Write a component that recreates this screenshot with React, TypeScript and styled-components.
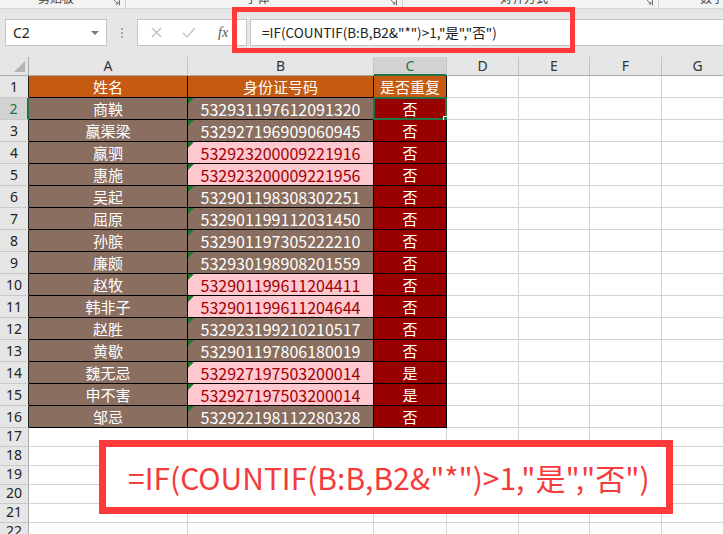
import React from 'react';
import styled, { createGlobalStyle, css } from 'styled-components';

const Global = createGlobalStyle`
  html, body { margin: 0; padding: 0; background: #fff; }
  body { font-family: "Noto Sans", "Noto Sans CJK SC", sans-serif; }
`;

const FORMULA = '=IF(COUNTIF(B:B,B2&"*")>1,"是","否")';

type Kind = 'head' | 'name' | 'id' | 'dup' | 'flag' | 'empty';

const rows: [string, string, boolean, string][] = [
  ['商鞅', '532931197612091320', false, '否'],
  ['嬴渠梁', '532927196909060945', false, '否'],
  ['嬴驷', '532923200009221916', true, '否'],
  ['惠施', '532923200009221956', true, '否'],
  ['吴起', '532901198308302251', false, '否'],
  ['屈原', '532901199112031450', false, '否'],
  ['孙膑', '532901197305222210', false, '否'],
  ['廉颇', '532930198908201559', false, '否'],
  ['赵牧', '532901199611204411', true, '否'],
  ['韩非子', '532901199611204644', true, '否'],
  ['赵胜', '532923199210210517', false, '否'],
  ['黄歇', '532901197806180019', false, '否'],
  ['魏无忌', '532927197503200014', true, '是'],
  ['申不害', '532927197503200014', true, '是'],
  ['邹忌', '532922198112280328', false, '否'],
];

const Page = styled.div`
  position: relative;
  width: 723px;
  height: 534px;
  overflow: hidden;
  background: #fff;
  display: flex;
  flex-direction: column;
`;

const RibbonStrip = styled.div`
  flex: none;
  height: 8px;
  background: #f3f3f3;
  border-bottom: 1px solid #d6d6d6;
  display: flex;
  overflow: hidden;
`;

const RibbonGroup = styled.div<{ $w: number }>`
  flex: none;
  width: ${p => p.$w}px;
  display: grid;
  grid-template-columns: 1fr auto;
  align-items: start;
  border-right: 1px solid #cfcfcf;
  box-sizing: border-box;
`;

const RibbonLabel = styled.span`
  justify-self: center;
  margin-top: -9px;
  font-family: "Noto Sans CJK SC", sans-serif;
  font-size: 12px;
  line-height: 14px;
  color: #444;
  white-space: nowrap;
`;

const Launcher = styled.svg`
  width: 8px;
  height: 8px;
  margin: -2px 5px 0 0;
`;

const FormulaBar = styled.div`
  flex: none;
  height: 48px;
  box-sizing: border-box;
  background: #e6e6e6;
  display: flex;
  align-items: flex-start;
  padding: 10px 0 0 5px;
`;

const NameBox = styled.div`
  flex: none;
  width: 102px;
  height: 27px;
  box-sizing: border-box;
  background: #fff;
  border: 1px solid #c6c6c6;
  display: flex;
  align-items: center;
  justify-content: space-between;
  padding: 0 7px 0 7px;
  font-size: 14px;
  color: #222;
`;

const Caret = styled.span`
  width: 0;
  height: 0;
  border-left: 4px solid transparent;
  border-right: 4px solid transparent;
  border-top: 4px solid #777;
`;

const Grip = styled.div`
  flex: none;
  width: 30px;
  height: 27px;
  display: flex;
  flex-direction: column;
  align-items: center;
  justify-content: center;
  gap: 2px;
`;

const GripDot = styled.span`
  width: 2px;
  height: 2px;
  background: #a8a8a8;
`;

const FxBox = styled.div`
  flex: none;
  width: 110px;
  height: 27px;
  box-sizing: border-box;
  background: #fff;
  border: 1px solid #c6c6c6;
  display: flex;
  align-items: center;
  padding-left: 13px;
  gap: 20px;
`;

const FxLabel = styled.span`
  font-family: "Liberation Serif", serif;
  font-style: italic;
  font-size: 14px;
  color: #555;
  margin-left: 2px;
`;

const FormulaInput = styled.div`
  flex: 1;
  margin-left: 3px;
  height: 27px;
  box-sizing: border-box;
  background: #fff;
  border: 1px solid #c6c6c6;
  border-right: none;
  padding-left: 11px;
  font-family: "Noto Sans CJK SC", sans-serif;
  font-size: 13.5px;
  line-height: 25px;
  color: #222;
  white-space: nowrap;
`;

const Sheet = styled.div`
  flex: none;
  display: grid;
  grid-template-columns: 29px 159px 186px 73px 72px 71px 72px 72px;
  grid-template-rows: 19px repeat(16, 22px) repeat(6, 19px);
`;

const Corner = styled.div`
  position: relative;
  box-sizing: border-box;
  background: #e6e6e6;
  border-right: 1px solid #ababab;
  border-bottom: 1px solid #ababab;
  &::after {
    content: '';
    position: absolute;
    right: 3px;
    bottom: 3px;
    width: 0;
    height: 0;
    border-left: 11px solid transparent;
    border-bottom: 11px solid #b4b4b4;
  }
`;

const ColHead = styled.div<{ $sel?: boolean }>`
  box-sizing: border-box;
  background: ${p => (p.$sel ? '#d2d2d2' : '#e6e6e6')};
  color: ${p => (p.$sel ? '#217346' : '#333')};
  border-right: 1px solid #c3c3c3;
  border-bottom: ${p => (p.$sel ? '2px solid #217346' : '1px solid #ababab')};
  display: flex;
  align-items: center;
  justify-content: center;
  font-size: 14px;
  line-height: 1;
`;

const RowHead = styled.div<{ $sel?: boolean; $table?: boolean }>`
  box-sizing: border-box;
  background: ${p => (p.$sel ? '#d2d2d2' : '#e6e6e6')};
  color: ${p => (p.$sel ? '#217346' : '#222')};
  border-bottom: 1px solid #c8c8c8;
  border-right: ${p =>
    p.$sel ? '2px solid #217346' : p.$table ? '1px solid #222' : '1px solid #ababab'};
  display: flex;
  align-items: flex-end;
  justify-content: center;
  padding-bottom: 1px;
  font-size: 14px;
  line-height: 18px;
`;

const palette: Record<Kind, { bg: string; fg: string; size: number }> = {
  head: { bg: '#c55a11', fg: '#fff', size: 15 },
  name: { bg: '#8a6e5f', fg: '#fff', size: 15 },
  id: { bg: '#8a6e5f', fg: '#fff', size: 16 },
  dup: { bg: '#ffc7ce', fg: '#9c0006', size: 16 },
  flag: { bg: '#990000', fg: '#fff', size: 15 },
  empty: { bg: '#fff', fg: '#000', size: 15 },
};

const Cell = styled.div<{ $kind: Kind }>`
  position: relative;
  box-sizing: border-box;
  background: ${p => palette[p.$kind].bg};
  color: ${p => palette[p.$kind].fg};
  font-size: ${p => palette[p.$kind].size}px;
  font-family: "Noto Sans CJK SC", sans-serif;
  border-right: 1px solid ${p => (p.$kind === 'empty' ? '#d4d4d4' : '#000')};
  border-bottom: 1px solid ${p => (p.$kind === 'empty' ? '#d4d4d4' : '#000')};
  display: flex;
  align-items: center;
  justify-content: center;
  line-height: 1;
  white-space: nowrap;
  ${p =>
    (p.$kind === 'id' || p.$kind === 'dup') &&
    css`
      &::before {
        content: '';
        position: absolute;
        left: 0;
        top: 0;
        width: 0;
        height: 0;
        border-top: 6px solid #1c7a2c;
        border-right: 6px solid transparent;
      }
    `}
`;

const Selection = styled.span`
  position: absolute;
  left: -1px;
  top: -1px;
  right: -1px;
  bottom: -1px;
  border: 2px solid #217346;
  pointer-events: none;
  &::after {
    content: '';
    position: absolute;
    right: -5px;
    bottom: -5px;
    width: 5px;
    height: 5px;
    background: #217346;
    border: 1px solid #fff;
  }
`;

const RedFrame = styled.div<{ $x: number; $y: number; $w: number; $h: number; $b: number; $fill?: boolean }>`
  position: absolute;
  left: ${p => p.$x}px;
  top: ${p => p.$y}px;
  width: ${p => p.$w}px;
  height: ${p => p.$h}px;
  box-sizing: border-box;
  border: ${p => p.$b}px solid #fe3a3a;
  background: ${p => (p.$fill ? '#fff' : 'transparent')};
  display: flex;
  align-items: center;
  padding-left: 22px;
`;

const CalloutText = styled.span`
  font-family: "Noto Sans CJK SC", sans-serif;
  font-size: 30px;
  line-height: 1;
  color: #f43c3c;
  white-space: nowrap;
`;

const LauncherIcon = () => (
  <Launcher viewBox="0 0 8 8">
    <path d="M0.5 0.5 H7.5 V7.5" fill="none" stroke="#777" strokeWidth="1" />
    <path d="M2 2 L6 6 M6 3.5 V6 H3.5" fill="none" stroke="#777" strokeWidth="1" />
  </Launcher>
);

const cols = ['A', 'B', 'C', 'D', 'E', 'F', 'G'];

export default function App() {
  const cells: React.ReactNode[] = [];
  cells.push(<Corner key="corner" />);
  cols.forEach(c => cells.push(<ColHead key={'h' + c} $sel={c === 'C'}>{c}</ColHead>));

  for (let r = 1; r <= 22; r++) {
    const inTable = r <= 16;
    cells.push(
      <RowHead key={'r' + r} $sel={r === 2} $table={inTable}>
        {r}
      </RowHead>
    );
    if (r === 1) {
      cells.push(<Cell key="a1" $kind="head">姓名</Cell>);
      cells.push(<Cell key="b1" $kind="head">身份证号码</Cell>);
      cells.push(<Cell key="c1" $kind="head">是否重复</Cell>);
    } else if (inTable) {
      const [name, id, dup, flag] = rows[r - 2];
      cells.push(<Cell key={'a' + r} $kind="name">{name}</Cell>);
      cells.push(<Cell key={'b' + r} $kind={dup ? 'dup' : 'id'}>{id}</Cell>);
      cells.push(
        <Cell key={'c' + r} $kind="flag">
          {flag}
          {r === 2 && <Selection />}
        </Cell>
      );
    } else {
      ['a', 'b', 'c'].forEach(c => cells.push(<Cell key={c + r} $kind="empty" />));
    }
    ['d', 'e', 'f', 'g'].forEach(c => cells.push(<Cell key={c + r} $kind="empty" />));
  }

  return (
    <Page>
      <Global />
      <RibbonStrip>
        <RibbonGroup $w={126}>
          <RibbonLabel>剪贴板</RibbonLabel>
          <LauncherIcon />
        </RibbonGroup>
        <RibbonGroup $w={277}>
          <RibbonLabel>字体</RibbonLabel>
          <LauncherIcon />
        </RibbonGroup>
        <RibbonGroup $w={256}>
          <RibbonLabel>对齐方式</RibbonLabel>
          <LauncherIcon />
        </RibbonGroup>
        <RibbonGroup $w={120}>
          <RibbonLabel>数字</RibbonLabel>
          <LauncherIcon />
        </RibbonGroup>
      </RibbonStrip>
      <FormulaBar>
        <NameBox>
          <span>C2</span>
          <Caret />
        </NameBox>
        <Grip>
          <GripDot />
          <GripDot />
          <GripDot />
        </Grip>
        <FxBox>
          <svg width="11" height="11" viewBox="0 0 11 11">
            <path d="M1 1 L10 10 M10 1 L1 10" stroke="#bdbdbd" strokeWidth="1.2" />
          </svg>
          <svg width="14" height="11" viewBox="0 0 14 11">
            <path d="M1 6 L5 10 L13 1" fill="none" stroke="#bdbdbd" strokeWidth="1.2" />
          </svg>
          <FxLabel>fx</FxLabel>
        </FxBox>
        <FormulaInput>{FORMULA}</FormulaInput>
      </FormulaBar>
      <Sheet>{cells}</Sheet>
      <RedFrame $x={232} $y={7} $w={343} $h={46} $b={5} />
      <RedFrame $x={99} $y={440} $w={574} $h={74} $b={7} $fill>
        <CalloutText>{FORMULA}</CalloutText>
      </RedFrame>
    </Page>
  );
}
